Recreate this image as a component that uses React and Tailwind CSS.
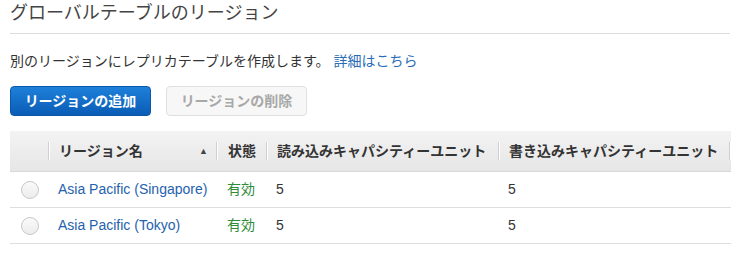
const font = { fontFamily: '"Liberation Sans", "Noto Sans CJK JP", sans-serif' };

const regions = [
  { name: "Asia Pacific (Singapore)", status: "有効", read: 5, write: 5 },
  { name: "Asia Pacific (Tokyo)", status: "有効", read: 5, write: 5 },
];

const Sep = () => (
  <div className="h-[18px] w-[2px] flex">
    <div className="w-px bg-[#cfcfcf]"></div>
    <div className="w-px bg-white"></div>
  </div>
);

const Radio = () => (
  <div className="w-[18px] h-[18px] rounded-full border border-[#c8c8c8] bg-gradient-to-b from-[#fafafa] to-[#ececec]"></div>
);

export default function App() {
  return (
    <div className="w-[731px] h-[260px] bg-white text-[#333] overflow-hidden" style={font}>
      <div className="pl-[10px]">
        <h2 className="text-[18px] leading-[24px] pt-[1px] text-[#444] font-normal">グローバルテーブルのリージョン</h2>
        <div className="mt-[8px] h-px bg-[#dcdcdc] w-[720px]"></div>

        <p className="mt-[18px] text-[14px] leading-[18px] text-[#333]">
          別のリージョンにレプリカテーブルを作成します。<span className="ml-[4px] text-[#2a6cb8]">詳細はこちら</span>
        </p>

        <div className="mt-[16px] flex gap-[15px]">
          <button className="w-[141px] h-[30px] rounded-[4px] bg-gradient-to-b from-[#1e80da] to-[#0b5cb5] border border-[#0a56a8] text-white text-[14px] font-bold">
            リージョンの追加
          </button>
          <button className="w-[141px] h-[30px] rounded-[4px] bg-[#f7f7f7] border border-[#e0e0e0] text-[#a8a8a8] text-[14px] font-bold">
            リージョンの削除
          </button>
        </div>

        <div className="mt-[15px]">
          <div className="flex items-center h-[41px] bg-gradient-to-b from-[#f3f3f3] to-[#e6e6e6] border-b border-[#d8d8d8] text-[14px] font-bold text-[#333]">
            <div className="w-[38px]"></div>
            <Sep />
            <div className="w-[166px] pl-[9px] pr-[8px] flex items-center justify-between">
              <span>リージョン名</span>
              <span className="text-[9px] text-[#444] leading-none">▲</span>
            </div>
            <Sep />
            <div className="w-[48px] pl-[10px]">状態</div>
            <Sep />
            <div className="w-[230px] pl-[9px]">読み込みキャパシティーユニット</div>
            <Sep />
            <div className="w-[229px] pl-[9px]">書き込みキャパシティーユニット</div>
            <Sep />
          </div>

          {regions.map((r) => (
            <div key={r.name} className="flex items-center h-[36px] border-b border-[#dedede] text-[14px]">
              <div className="w-[38px] flex justify-center pl-[1px]">
                <Radio />
              </div>
              <div className="w-[168px] pl-[10px] text-[#2562ad]">{r.name}</div>
              <div className="w-[50px] pl-[11px] text-[#2e8b37]">{r.status}</div>
              <div className="w-[232px] pl-[10px]">{r.read}</div>
              <div className="w-[231px] pl-[10px]">{r.write}</div>
            </div>
          ))}
        </div>
      </div>
    </div>
  );
}
